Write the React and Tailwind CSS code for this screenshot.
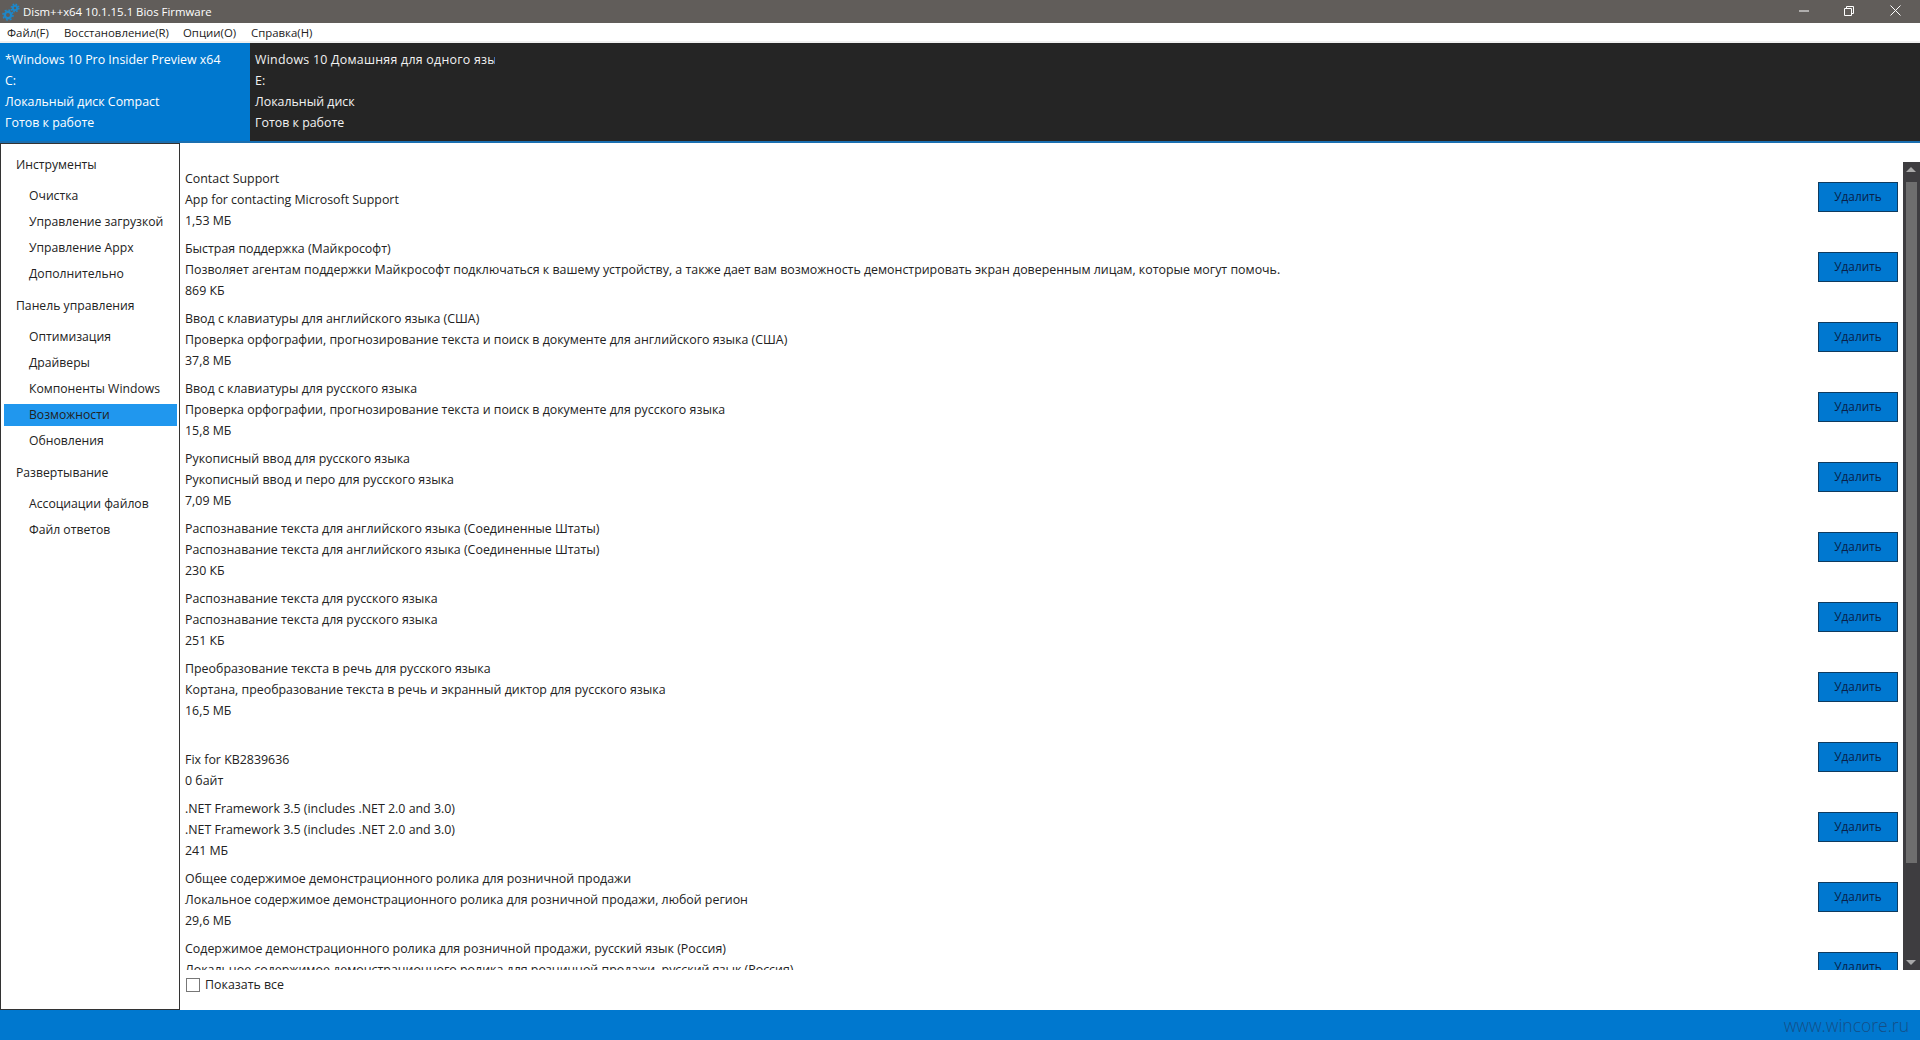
import React from 'react';

const FONT = "font-['Open_Sans','Noto_Sans',sans-serif]";

const features = [
    ['Contact Support', 'App for contacting Microsoft Support', '1,53 МБ'],
    ['Быстрая поддержка (Майкрософт)', 'Позволяет агентам поддержки Майкрософт подключаться к вашему устройству, а также дает вам возможность демонстрировать экран доверенным лицам, которые могут помочь.', '869 КБ'],
    ['Ввод с клавиатуры для английского языка (США)', 'Проверка орфографии, прогнозирование текста и поиск в документе для английского языка (США)', '37,8 МБ'],
    ['Ввод с клавиатуры для русского языка', 'Проверка орфографии, прогнозирование текста и поиск в документе для русского языка', '15,8 МБ'],
    ['Рукописный ввод для русского языка', 'Рукописный ввод и перо для русского языка', '7,09 МБ'],
    ['Распознавание текста для английского языка (Соединенные Штаты)', 'Распознавание текста для английского языка (Соединенные Штаты)', '230 КБ'],
    ['Распознавание текста для русского языка', 'Распознавание текста для русского языка', '251 КБ'],
    ['Преобразование текста в речь для русского языка', 'Кортана, преобразование текста в речь и экранный диктор для русского языка', '16,5 МБ'],
    ['', 'Fix for KB2839636', '0 байт'],
    ['.NET Framework 3.5 (includes .NET 2.0 and 3.0)', '.NET Framework 3.5 (includes .NET 2.0 and 3.0)', '241 МБ'],
    ['Общее содержимое демонстрационного ролика для розничной продажи', 'Локальное содержимое демонстрационного ролика для розничной продажи, любой регион', '29,6 МБ'],
    ['Содержимое демонстрационного ролика для розничной продажи, русский язык (Россия)', 'Локальное содержимое демонстрационного ролика для розничной продажи, русский язык (Россия)', '5,12 МБ'],
];

const nav = [
    { title: 'Инструменты', items: ['Очистка', 'Управление загрузкой', 'Управление Appx', 'Дополнительно'] },
    { title: 'Панель управления', items: ['Оптимизация', 'Драйверы', 'Компоненты Windows', 'Возможности', 'Обновления'] },
    { title: 'Развертывание', items: ['Ассоциации файлов', 'Файл ответов'] },
];

function GearsIcon() {
    return (
        <svg width="18" height="18" viewBox="0 0 18 18" className="shrink-0">
            <circle cx="6" cy="12" r="3.2" fill="none" stroke="#1e87c8" strokeWidth="2.4" />
            <circle cx="6" cy="12" r="5" fill="none" stroke="#1e87c8" strokeWidth="1.6" strokeDasharray="2 1.9" />
            <circle cx="13" cy="5" r="2.2" fill="none" stroke="#1e87c8" strokeWidth="2" />
            <circle cx="13" cy="5" r="3.8" fill="none" stroke="#1e87c8" strokeWidth="1.4" strokeDasharray="1.6 1.4" />
        </svg>
    );
}

function TitleBar() {
    return (
        <div className="flex h-[23px] items-center bg-[#615d5a] pl-[2px] text-white">
            <GearsIcon />
            <span className="ml-[3px] text-[11.4px]">Dism++x64 10.1.15.1 Bios Firmware</span>
            <div className="ml-auto flex items-center pb-[2px]">
                <svg width="10" height="10" viewBox="0 0 10 10" className="mr-[35px]">
                    <path d="M0 5h10" stroke="#fff" strokeWidth="1" />
                </svg>
                <svg width="10" height="10" viewBox="0 0 10 10" className="mr-[36px]">
                    <path d="M.5 2.5h7v7h-7zM2.5 2.5v-2h7v7h-2" fill="none" stroke="#fff" strokeWidth="1" />
                </svg>
                <svg width="11" height="11" viewBox="0 0 11 11" className="mr-[19px]">
                    <path d="M.5.5l10 10M10.5.5l-10 10" stroke="#fff" strokeWidth="1" />
                </svg>
            </div>
        </div>
    );
}

function MenuBar() {
    return (
        <div className="flex h-[20px] items-start border-b-2 border-[#f0f0f0] bg-white pl-[7px] pt-[1px] text-[11.4px] leading-[18px] text-[#222]">
            <span className="w-[57px]">Файл(F)</span>
            <span className="w-[119px]">Восстановление(R)</span>
            <span className="w-[68px]">Опции(O)</span>
            <span>Справка(H)</span>
        </div>
    );
}

function SystemInfo({ lines, className }) {
    return (
        <div className={`overflow-hidden whitespace-nowrap pl-[5px] pt-[6px] text-[12.4px] leading-[21px] ${className}`}>
            {lines.map((line, i) => (
                <div key={i}>{line}</div>
            ))}
        </div>
    );
}

function Sidebar() {
    return (
        <aside className="flex w-[180px] shrink-0 flex-col border border-[#333] bg-white pl-[3px] pr-[2px] pt-[9px] text-[12.2px] text-[#222]">
            {nav.map((group) => (
                <div key={group.title} className="mb-[5px]">
                    <div className="mb-[8px] pl-[12px] leading-[24px]">{group.title}</div>
                    {group.items.map((item) => (
                        <div
                            key={item}
                            className={`mb-[4px] h-[22px] pl-[25px] leading-[22px] ${item === 'Возможности' ? 'bg-[#2097ee]' : ''}`}
                        >
                            {item}
                        </div>
                    ))}
                </div>
            ))}
        </aside>
    );
}

function FeatureRow({ title, description, size }) {
    return (
        <div className="flex h-[70px] shrink-0 items-start px-[5px]">
            <div className="flex-1 whitespace-nowrap pt-[1px] text-[12.4px] leading-[21px] text-[#222]">
                <div className="h-[21px]">{title}</div>
                <div>{description}</div>
                <div>{size}</div>
            </div>
            <button className="mt-[15px] h-[30px] w-[80px] shrink-0 border border-[#0f3b5f] bg-[#0078d0] text-[11.8px] text-[#0a1f48]">
                Удалить
            </button>
        </div>
    );
}

function Scrollbar() {
    return (
        <div className="relative h-full w-[17px] shrink-0 bg-[#3e3d40] pt-[20px]">
            <div className="absolute left-[3px] top-[5px] h-0 w-0 border-x-[5px] border-b-[5px] border-x-transparent border-b-[#a8a8a8]" />
            <div className="mx-[3px] h-[681px] bg-[#6e6e6e]" />
            <div className="absolute bottom-[5px] left-[3px] h-0 w-0 border-x-[5px] border-t-[5px] border-x-transparent border-t-[#a8a8a8]" />
        </div>
    );
}

export default function App() {
    return (
        <div className={`flex h-screen flex-col overflow-hidden bg-white ${FONT}`}>
            <TitleBar />
            <MenuBar />
            <div className="flex h-[100px] shrink-0 border-b-2 border-[#1a6fb0] bg-[#252525] text-[#f2f2f2]">
                <SystemInfo
                    className="w-[250px] shrink-0 bg-[#0078cf] text-white"
                    lines={['*Windows 10 Pro Insider Preview x64', 'C:', 'Локальный диск Compact', 'Готов к работе']}
                />
                <SystemInfo
                    className="w-[245px] shrink-0"
                    lines={[
                        <span className="tracking-[0.25px]">Windows 10 Домашняя для одного языка</span>,
                        'E:',
                        'Локальный диск',
                        'Готов к работе',
                    ]}
                />
            </div>
            <div className="flex min-h-0 flex-1">
                <Sidebar />
                <main className="flex min-w-0 flex-1 flex-col pt-[19px]">
                    <div className="flex h-[808px] shrink-0">
                        <div className="flex min-w-0 flex-1 flex-col overflow-hidden pt-[5px]">
                            {features.map((f) => (
                                <FeatureRow key={f[1]} title={f[0]} description={f[1]} size={f[2]} />
                            ))}
                        </div>
                        <Scrollbar />
                    </div>
                    <label className="flex items-center pl-[6px] pt-[6px] text-[12.4px] leading-[18px] text-[#222]">
                        <span className="h-[14px] w-[14px] border border-[#777] bg-white" />
                        <span className="ml-[5px]">Показать все</span>
                    </label>
                </main>
            </div>
            <div className="flex h-[30px] shrink-0 items-center justify-end bg-[#0078cf] pr-[11px] text-[17.5px] font-light text-[#144f88]">
                www.wincore.ru
            </div>
        </div>
    );
}
